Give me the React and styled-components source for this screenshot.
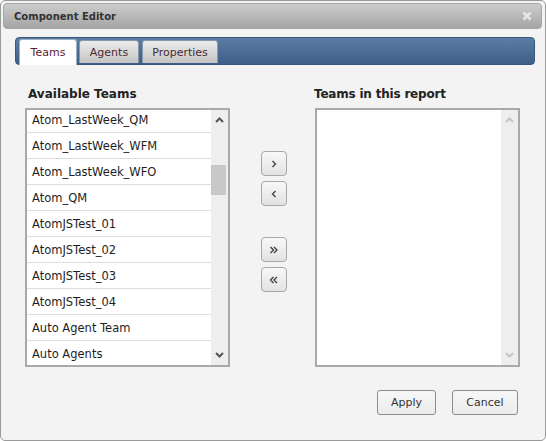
import React from "react";
import styled, { createGlobalStyle, css } from "styled-components";

const GlobalStyle = createGlobalStyle`
  html, body {
    margin: 0;
    padding: 0;
    background: #ffffff;
  }
  body {
    font-family: "DejaVu Sans", Verdana, sans-serif;
  }
`;

const Dialog = styled.div`
  box-sizing: border-box;
  width: 546px;
  height: 441px;
  border: 1px solid #9a9a9a;
  border-radius: 5px;
  background: #f3f3f3;
  padding: 2px;
  display: flex;
  flex-direction: column;
`;

const TitleBar = styled.div`
  box-sizing: border-box;
  height: 26px;
  margin-right: 1px;
  border-radius: 4px;
  border: 1px solid #a6a6a6;
  background: linear-gradient(#cdcdcd, #a4a4a4);
  display: flex;
  align-items: center;
  justify-content: space-between;
  padding: 0 9px 0 10px;
`;

const Title = styled.h1`
  margin: 0;
  font-size: 10px;
  font-weight: bold;
  color: #333333;
`;

const CloseBtn = styled.button`
  border: 0;
  padding: 0;
  background: none;
  width: 10px;
  height: 10px;
  display: flex;
  cursor: pointer;
`;

const TabBar = styled.div`
  box-sizing: border-box;
  height: 28px;
  margin: 8px 8px 0 12px;
  border-radius: 4px;
  border: 1px solid #38577d;
  background: linear-gradient(#5c7da4, #3c5e88);
  display: flex;
  align-items: flex-end;
  gap: 3px;
  padding: 2px 0 0 3px;
`;

const Tab = styled.button`
  box-sizing: border-box;
  width: ${(p) => p.$w}px;
  height: 23px;
  margin-bottom: 1px;
  padding: 0;
  border: 1px solid #8a98aa;
  border-bottom: 0;
  border-radius: 3px 3px 0 0;
  background: linear-gradient(#ececec, #c4c4c4);
  font-family: inherit;
  font-size: 11px;
  color: #4a2a30;
  cursor: pointer;
  ${(p) =>
    p.$active &&
    css`
      height: 26px;
      margin-bottom: -1px;
      margin-right: -1px;
      background: #ffffff;
      border-color: #9fb0c4;
      color: #5a1a30;
    `}
`;

const Content = styled.div`
  display: flex;
  padding: 22px 0 0 22px;
`;

const Column = styled.div`
  display: flex;
  flex-direction: column;
  width: 205px;
`;

const Label = styled.h2`
  margin: 0 0 7px 3px;
  font-size: 12px;
  line-height: 14px;
  font-weight: bold;
  color: #222222;
  white-space: nowrap;
  ${(p) =>
    p.$tight &&
    css`
      margin-left: -1px;
      letter-spacing: -0.2px;
    `}
`;

const ListBox = styled.div`
  box-sizing: border-box;
  height: 259px;
  border: 2px solid #a9a9a9;
  background: #ffffff;
  display: flex;
  overflow: hidden;
`;

const ListBody = styled.ul`
  list-style: none;
  margin: -3px 0 0;
  padding: 0;
  flex: 1;
`;

const Row = styled.li`
  box-sizing: border-box;
  height: 26px;
  border-bottom: 1px solid #dddddd;
  padding: 0 5px;
  display: flex;
  align-items: center;
  font-size: 11.5px;
  color: #1e1e1e;
  white-space: nowrap;
`;

const ScrollTrack = styled.div`
  width: 17px;
  background: #eeeeee;
  display: flex;
  flex-direction: column;
  align-items: center;
`;

const ArrowSlot = styled.div`
  height: 20px;
  display: flex;
  align-items: center;
  justify-content: center;
  width: 100%;
`;

const Thumb = styled.div`
  margin: 35px 1px 0 0;
  width: 15px;
  height: 30px;
  background: #c8c8c8;
  align-self: flex-start;
`;

const Spacer = styled.div`
  flex: 1;
`;

const Middle = styled.div`
  width: 85px;
  display: flex;
  flex-direction: column;
  align-items: center;
  padding: 64px 0 0 3px;
  box-sizing: border-box;
`;

const MoveBtn = styled.button`
  box-sizing: border-box;
  width: 26px;
  height: 25px;
  margin-bottom: 5px;
  border: 1px solid #a8a8a8;
  border-radius: 4px;
  background: linear-gradient(#f8f8f8, #e2e2e2);
  display: flex;
  align-items: center;
  justify-content: center;
  padding: 0;
  cursor: pointer;
  ${(p) =>
    p.$gap &&
    css`
      margin-top: 26px;
    `}
`;

const Footer = styled.div`
  display: flex;
  justify-content: flex-end;
  gap: 16px;
  padding: 23px 25px 0 0;
`;

const ActionBtn = styled.button`
  box-sizing: border-box;
  height: 25px;
  width: ${(p) => p.$w}px;
  border: 1px solid #8c8c8c;
  border-radius: 3px;
  background: linear-gradient(#f7f7f7, #ececec);
  font-family: inherit;
  font-size: 11px;
  color: #333333;
  cursor: pointer;
`;

const Chevron = ({ up, color }) => (
  <svg width="9" height="6" viewBox="0 0 9 6">
    <path
      d={up ? "M1 5 L4.5 1.5 L8 5" : "M1 1 L4.5 4.5 L8 1"}
      fill="none"
      stroke={color}
      strokeWidth="2"
    />
  </svg>
);

const Arrow = ({ dir, double }) => {
  const one = (x) =>
    dir === "right"
      ? `M${x} 1 L${x + 3} 4 L${x} 7`
      : `M${x + 3} 1 L${x} 4 L${x + 3} 7`;
  return (
    <svg width={double ? 10 : 6} height="8" viewBox={double ? "0 0 10 8" : "0 0 6 8"}>
      <path
        d={double ? `${one(1.5)} ${one(5)}` : one(1.5)}
        fill="none"
        stroke="#444"
        strokeWidth="1.4"
      />
    </svg>
  );
};

const teams = [
  "Atom_LastWeek_QM",
  "Atom_LastWeek_WFM",
  "Atom_LastWeek_WFO",
  "Atom_QM",
  "AtomJSTest_01",
  "AtomJSTest_02",
  "AtomJSTest_03",
  "AtomJSTest_04",
  "Auto Agent Team",
  "Auto Agents",
];

const App = () => {
  return (
    <>
      <GlobalStyle />
      <Dialog>
        <TitleBar>
          <Title>Component Editor</Title>
          <CloseBtn aria-label="Close">
            <svg width="10" height="10" viewBox="0 0 10 10">
              <path d="M1.5 1.5 L8.5 8.5 M8.5 1.5 L1.5 8.5" stroke="#dfe8f1" strokeWidth="2.6" />
            </svg>
          </CloseBtn>
        </TitleBar>
        <TabBar>
          <Tab $active $w={58}>Teams</Tab>
          <Tab $w={60}>Agents</Tab>
          <Tab $w={76}>Properties</Tab>
        </TabBar>
        <Content>
          <Column>
            <Label>Available Teams</Label>
            <ListBox>
              <ListBody>
                {teams.map((t) => (
                  <Row key={t}>{t}</Row>
                ))}
              </ListBody>
              <ScrollTrack>
                <ArrowSlot>
                  <Chevron up color="#555" />
                </ArrowSlot>
                <Thumb />
                <Spacer />
                <ArrowSlot>
                  <Chevron color="#555" />
                </ArrowSlot>
              </ScrollTrack>
            </ListBox>
          </Column>
          <Middle>
            <MoveBtn aria-label="Add">
              <Arrow dir="right" />
            </MoveBtn>
            <MoveBtn aria-label="Remove">
              <Arrow dir="left" />
            </MoveBtn>
            <MoveBtn $gap aria-label="Add all">
              <Arrow dir="right" double />
            </MoveBtn>
            <MoveBtn aria-label="Remove all">
              <Arrow dir="left" double />
            </MoveBtn>
          </Middle>
          <Column>
            <Label $tight>Teams in this report</Label>
            <ListBox>
              <ListBody />
              <ScrollTrack>
                <ArrowSlot>
                  <Chevron up color="#c4c4c4" />
                </ArrowSlot>
                <Spacer />
                <ArrowSlot>
                  <Chevron color="#c4c4c4" />
                </ArrowSlot>
              </ScrollTrack>
            </ListBox>
          </Column>
        </Content>
        <Footer>
          <ActionBtn $w={59}>Apply</ActionBtn>
          <ActionBtn $w={66}>Cancel</ActionBtn>
        </Footer>
      </Dialog>
    </>
  );
};

export default App;
